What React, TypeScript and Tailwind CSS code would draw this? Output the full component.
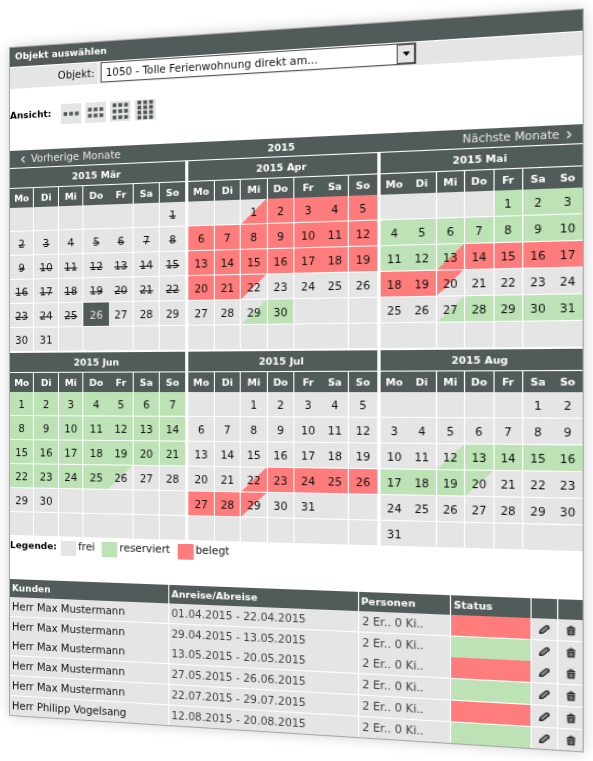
import { ChevronLeft, ChevronRight } from 'lucide-react'

type DayState = 'free' | 'reserved' | 'booked' | 'freeBooked' | 'bookedFree' | 'freeReserved' | 'reservedFree' | 'reservedBooked' | 'today'

type Month = {
  name: string
  // weekday of the first day, Monday = 0
  offset: number
  days: number
  // last day that is struck through
  past?: number
  ranges: [number, number, DayState][]
}

const months: Month[] = [
  { name: '2015 Mär', offset: 6, days: 31, past: 25, ranges: [[26, 26, 'today']] },
  {
    name: '2015 Apr',
    offset: 2,
    days: 30,
    ranges: [[1, 1, 'freeBooked'], [2, 21, 'booked'], [22, 22, 'bookedFree'], [29, 29, 'freeReserved'], [30, 30, 'reserved']],
  },
  {
    name: '2015 Mai',
    offset: 4,
    days: 31,
    ranges: [[1, 12, 'reserved'], [13, 13, 'reservedBooked'], [14, 19, 'booked'], [20, 20, 'bookedFree'], [27, 27, 'freeReserved'], [28, 31, 'reserved']],
  },
  { name: '2015 Jun', offset: 0, days: 30, ranges: [[1, 25, 'reserved'], [26, 26, 'reservedFree']] },
  {
    name: '2015 Jul',
    offset: 2,
    days: 31,
    ranges: [[22, 22, 'freeBooked'], [23, 28, 'booked'], [29, 29, 'bookedFree']],
  },
  {
    name: '2015 Aug',
    offset: 5,
    days: 31,
    ranges: [[12, 12, 'freeReserved'], [13, 19, 'reserved'], [20, 20, 'reservedFree']],
  },
]

const stateClass: Record<DayState, string> = {
  free: 'bg-[#e5e5e5]',
  reserved: 'bg-[#bce2b5]',
  booked: 'bg-[#ff7c7c]',
  freeBooked: 'bg-[linear-gradient(to_bottom_right,#e5e5e5_50%,#ff7c7c_50%)]',
  bookedFree: 'bg-[linear-gradient(to_bottom_right,#ff7c7c_50%,#e5e5e5_50%)]',
  freeReserved: 'bg-[linear-gradient(to_bottom_right,#e5e5e5_50%,#bce2b5_50%)]',
  reservedFree: 'bg-[linear-gradient(to_bottom_right,#bce2b5_50%,#e5e5e5_50%)]',
  reservedBooked: 'bg-[linear-gradient(to_bottom_right,#bce2b5_50%,#ff7c7c_50%)]',
  today: 'bg-[#515b59] text-[#e5e5e5]',
}

const weekdays = ['Mo', 'Di', 'Mi', 'Do', 'Fr', 'Sa', 'So']

// weekday columns that run into the next one without a line, per calendar column
const joined = [[3], [4], [0, 5]]

const bookings = [
  { customer: 'Herr Max Mustermann', dates: '01.04.2015 - 22.04.2015', booked: true },
  { customer: 'Herr Max Mustermann', dates: '29.04.2015 - 13.05.2015', booked: false },
  { customer: 'Herr Max Mustermann', dates: '13.05.2015 - 20.05.2015', booked: true },
  { customer: 'Herr Max Mustermann', dates: '27.05.2015 - 26.06.2015', booked: false },
  { customer: 'Herr Max Mustermann', dates: '22.07.2015 - 29.07.2015', booked: true },
  { customer: 'Herr Philipp Vogelsang', dates: '12.08.2015 - 20.08.2015', booked: false },
]

function stateOf(month: Month, day: number): DayState {
  const range = month.ranges.find(([from, to]) => day >= from && day <= to)
  return range ? range[2] : 'free'
}

function MonthTable({ month, column }: { month: Month; column: number }) {
  const line = (i: number) => (i === 6 || joined[column].includes(i) ? '' : 'border-r border-white')

  return (
    <table className="w-full table-fixed border-separate border-spacing-0 text-center">
      <caption className="h-5 border-b border-white bg-[#515b59] text-[9px] leading-[20px] font-bold text-white">
        {month.name}
      </caption>
      <thead>
        <tr>
          {weekdays.map((name, i) => (
            <th key={name} className={`h-[19px] bg-[#515b59] p-0 text-[9px] leading-[18px] text-white ${line(i)}`}>
              {name}
            </th>
          ))}
        </tr>
      </thead>
      <tbody>
        {[0, 1, 2, 3, 4, 5].map((week) => (
          <tr key={week}>
            {weekdays.map((name, i) => {
              const day = week * 7 + i - month.offset + 1
              const valid = day >= 1 && day <= month.days
              const state = valid ? stateOf(month, day) : 'free'
              return (
                <td
                  key={name}
                  className={`px-0 pt-[3px] pb-0 leading-[18px] ${week === 5 ? 'h-[23px]' : 'h-6 border-b border-b-white'} ${line(i)} ${stateClass[state]}`}
                >
                  {valid && (month.past && day <= month.past ? <s>{day}</s> : day)}
                </td>
              )
            })}
          </tr>
        ))}
      </tbody>
    </table>
  )
}

function DotsIcon({ rows }: { rows: number }) {
  const step = rows === 4 ? 4.9 : 6
  const top = 10 - ((rows - 1) * step + 3.6) / 2
  return (
    <svg viewBox="0 0 20 20" className="size-5" aria-hidden="true">
      {Array.from({ length: rows * 3 }, (_, i) => (
        <rect key={i} x={2.6 + (i % 3) * 5.6} y={top + Math.floor(i / 3) * step} width="3.6" height="3.6" fill="#4f5553" />
      ))}
    </svg>
  )
}

function PencilIcon() {
  return (
    <svg viewBox="0 0 10 10" className="mx-auto h-[10px] w-[9px]" aria-hidden="true">
      <path d="M.8 8.9 1.2 6 6 1.6Q7.4.4 8.8 1.6 10 3 8.6 4.2L3.8 8.5Z" fill="#8a8a8a" stroke="#222" strokeWidth="1.2" strokeLinejoin="round" />
      <path d="M.8 8.9 1.1 6.8 3.1 8.6Z" fill="#222" />
    </svg>
  )
}

function TrashIcon() {
  return (
    <svg viewBox="0 0 10 10" className="mx-auto h-[10px] w-[9px]" aria-hidden="true">
      <path d="M3.6 1.4V.7H6.4V1.4" fill="none" stroke="#222" />
      <path d="M.7 3.4Q1 1.3 3 1.3H7Q9 1.3 9.3 3.4Z" fill="#222" />
      <path d="M1.5 4H8.5L8.2 9.7H1.8Z" fill="#222" />
      <path d="M3.4 4.6V8.8M5 4.6V8.8M6.6 4.6V8.8" stroke="#b5b5b5" strokeWidth=".8" />
    </svg>
  )
}

function Legend({ color, label }: { color: string; label: string }) {
  return (
    <span className="flex gap-[2px]">
      <span className={`size-[15px] ${color}`} />
      {label}
    </span>
  )
}

export default function App() {
  return (
    <div className="overflow-hidden bg-white pt-12 pr-[63px] pb-12 pl-[10px] font-['Verdana','DejaVu_Sans',sans-serif] text-[10px] leading-3 text-[#111]">
      <main className="origin-[0_51.4%] [transform:perspective(718px)_rotateY(-8deg)] bg-white shadow-[0_0_12px_rgba(0,0,0,0.22)] outline outline-[#a8a8a8]">
        <h1 className="bg-[#515b59] px-[5px] text-[9px] leading-[19px] font-bold text-white">Objekt auswählen</h1>
        <div className="mt-px flex h-[21px] gap-px">
          <label htmlFor="object" className="w-[87px] bg-[#e5e5e5] pr-[3px] text-right leading-[22px]">
            Objekt:
          </label>
          <div className="flex-1 bg-[#e5e5e5] pl-[2px]">
            <div className="relative w-[290px]">
              <select id="object" className="h-5 w-full appearance-none border border-[#555] bg-white pt-px pl-1 leading-[18px]">
                <option>1050 - Tolle Ferienwohnung direkt am...</option>
              </select>
              <span className="pointer-events-none absolute inset-y-px right-px flex w-4 items-center justify-center border border-[#555] bg-[#e5e5e5]">
                <svg viewBox="0 0 8 5" className="h-1 w-[7px]" aria-hidden="true">
                  <path d="M0 0H8L4 5Z" fill="#000" />
                </svg>
              </span>
            </div>
          </div>
        </div>

        <div className="mt-[18px] flex gap-1">
          <span className="w-[47px] text-[9px] leading-[18px] font-bold text-black">Ansicht:</span>
          {[1, 2, 3, 4].map((rows) => (
            <button key={rows} type="button" aria-label={`${rows * 3}`} className="size-5 bg-[#e5e5e5]">
              <DotsIcon rows={rows} />
            </button>
          ))}
        </div>

        <nav className="mt-6 grid h-[17px] grid-cols-3 items-center bg-[#515b59] leading-[18px] text-[#e5e5e5]">
          <a href="#prev" className="flex items-center gap-[3px] pl-2">
            <ChevronLeft size={10} strokeWidth={3} />
            Vorherige Monate
          </a>
          <span className="text-center text-[9px] font-bold text-white">2015</span>
          <a href="#next" className="flex items-center justify-end gap-[3px] pr-[6px]">
            Nächste Monate
            <ChevronRight size={10} strokeWidth={3} />
          </a>
        </nav>
        <div className="mt-px grid grid-cols-3 gap-x-[3px] gap-y-[2px]">
          {months.map((month, i) => (
            <MonthTable key={month.name} month={month} column={i % 3} />
          ))}
        </div>

        <div className="mt-1 flex gap-[7px]">
          <span className="w-[44px] text-[9px] font-bold text-black">Legende:</span>
          <Legend color="bg-[#e5e5e5]" label="frei" />
          <Legend color="bg-[#bce2b5]" label="reserviert" />
          <Legend color="bg-[#ff7c7c]" label="belegt" />
        </div>

        <table className="mt-[25px] w-full table-fixed border-separate border-spacing-0 text-left">
          <colgroup>
            <col className="w-[30%]" />
            <col className="w-[33.4%]" />
            <col className="w-[15.5%]" />
            <col className="w-[13.1%]" />
            <col className="w-[4.2%]" />
            <col className="w-[3.8%]" />
          </colgroup>
          <thead>
            <tr className="text-[9px] text-white [&>th]:h-[18px] [&>th]:border-white [&>th]:bg-[#515b59] [&>th]:p-0 [&>th]:pl-[2px] [&>th:not(:last-child)]:border-r">
              <th>Kunden</th>
              <th>Anreise/Abreise</th>
              <th>Personen</th>
              <th>Status</th>
              <th aria-label="Bearbeiten" />
              <th aria-label="Löschen" />
            </tr>
          </thead>
          <tbody>
            {bookings.map((booking, i) => (
              <tr
                key={booking.dates}
                className={`[&>td]:border-white [&>td]:p-0 [&>td:not(:last-child)]:border-r ${i === 1 || i === 5 ? '[&>td]:h-[19px]' : '[&>td]:h-5 [&>td]:border-b'}`}
              >
                <td className="bg-[#e5e5e5]">
                  <span className="pl-[2px]">{booking.customer}</span>
                </td>
                <td className="bg-[#e5e5e5] text-[#444]">
                  <span className="pl-[2px]">{booking.dates}</span>
                </td>
                <td className="bg-[#e5e5e5] text-[#444]">
                  <span className="pl-[3px]">2 Er.. 0 Ki..</span>
                </td>
                <td className={booking.booked ? 'bg-[#ff7c7c]' : 'bg-[#bce2b5]'} />
                <td className="bg-[#e5e5e5]">
                  <button type="button" aria-label="Bearbeiten" className="block w-full">
                    <PencilIcon />
                  </button>
                </td>
                <td className="bg-[#e5e5e5]">
                  <button type="button" aria-label="Löschen" className="block w-full">
                    <TrashIcon />
                  </button>
                </td>
              </tr>
            ))}
          </tbody>
        </table>
      </main>
    </div>
  )
}
